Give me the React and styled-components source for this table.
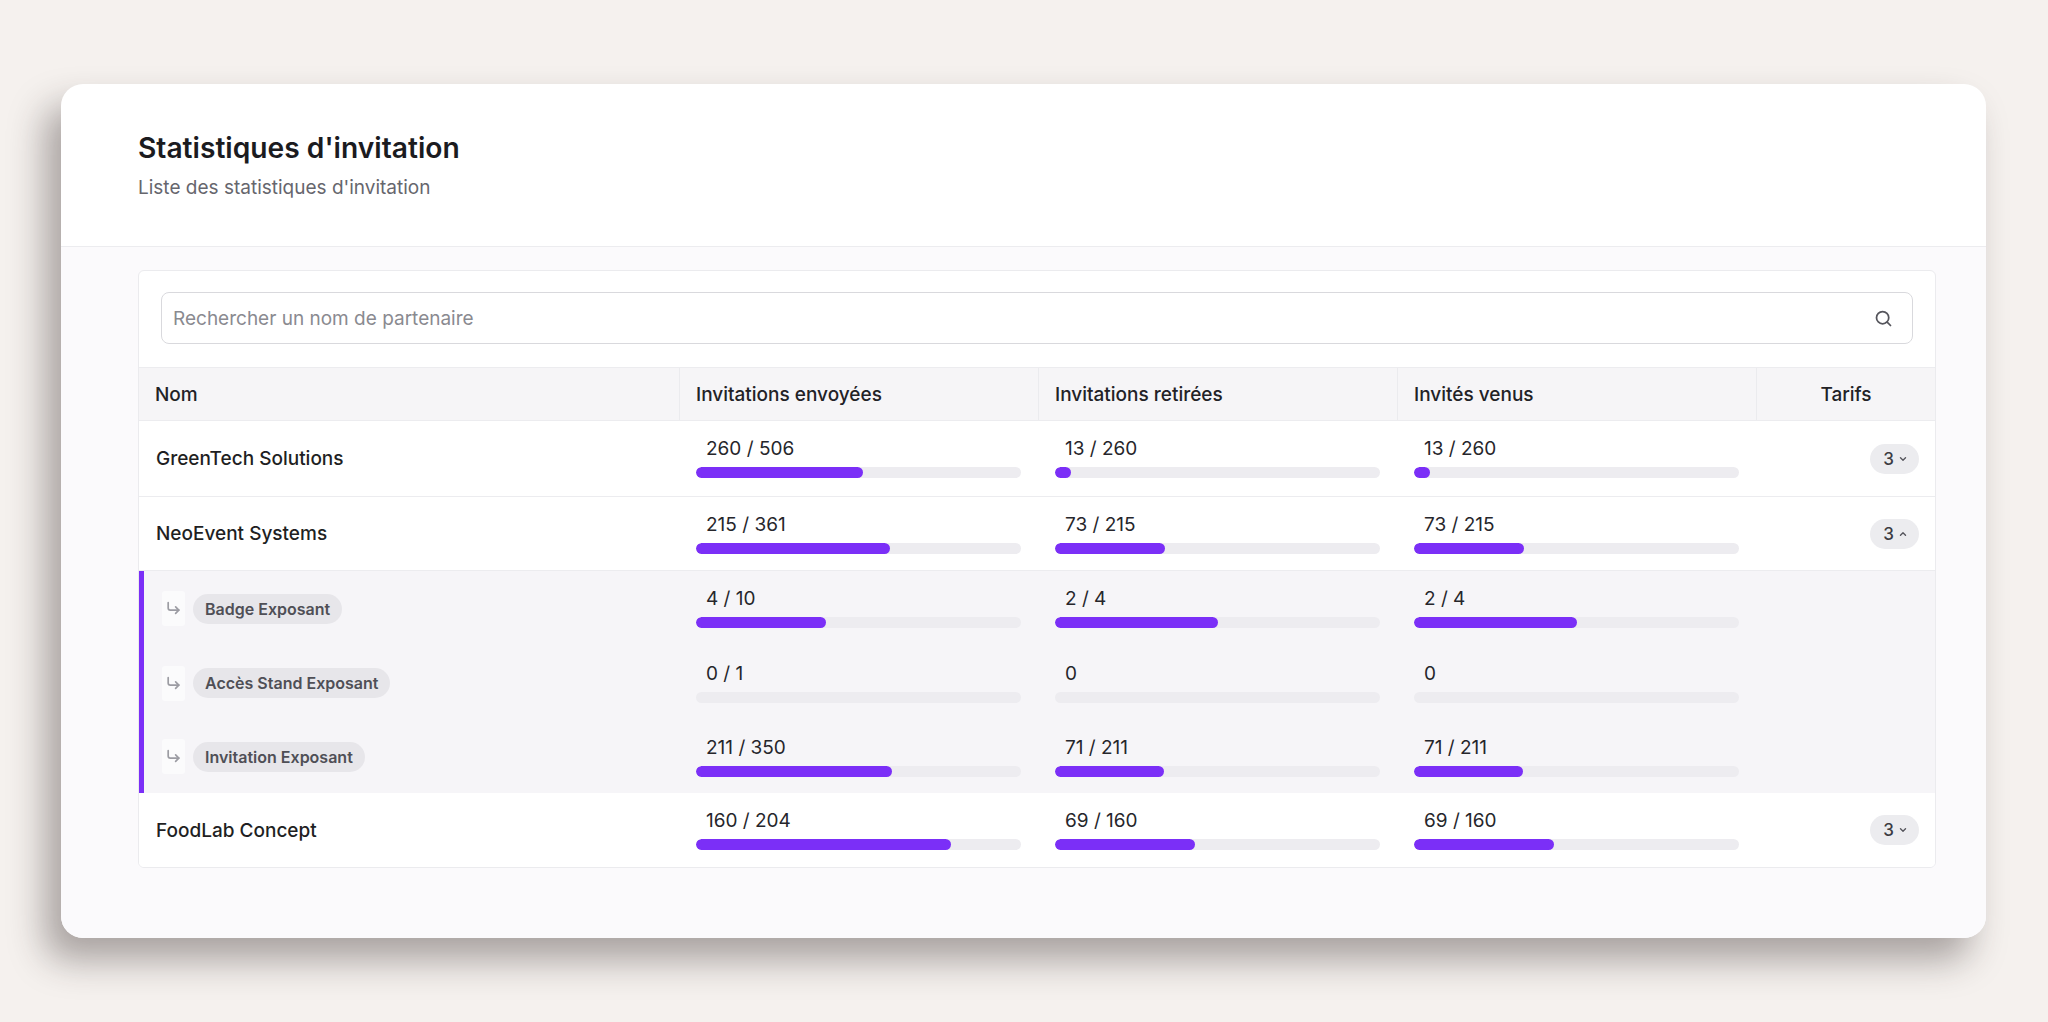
import React from 'react';
import styled, { createGlobalStyle } from 'styled-components';

const GlobalStyle = createGlobalStyle`
  html, body {
    margin: 0;
    padding: 0;
    background: #f5f1ee;
    font-family: Inter, "Noto Sans", sans-serif;
    color: #1f1f23;
  }
`;

const Page = styled.div`
  min-height: 1022px;
  padding: 84px 62px 0 61px;
  box-sizing: border-box;
`;

const Card = styled.div`
  background: #ffffff;
  border-radius: 22px;
  overflow: hidden;
  box-shadow: -16px 22px 36px rgba(45, 35, 35, 0.38);
`;

const Header = styled.div`
  padding: 46px 77px 45px;
  border-bottom: 1px solid #ececef;
`;

const Title = styled.h1`
  margin: 0;
  font-size: 28.2px;
  line-height: 36px;
  font-weight: 600;
  color: #1b1b1f;
`;

const Subtitle = styled.p`
  margin: 9px 0 0;
  font-size: 19px;
  line-height: 26px;
  color: #66666d;
`;

const Body = styled.div`
  background: #fbfafc;
  padding: 23px 50px 70px 77px;
`;

const Panel = styled.div`
  background: #ffffff;
  border: 1px solid #ebebee;
  border-radius: 6px;
  overflow: hidden;
`;

const SearchWrap = styled.div`
  padding: 21px 22px 23px;
`;

const SearchBox = styled.label`
  display: flex;
  align-items: center;
  height: 52px;
  box-sizing: border-box;
  border: 1.5px solid #d9d9dd;
  border-radius: 8px;
  padding: 0 18px 0 9px;
`;

const SearchInput = styled.input`
  flex: 1;
  border: 0;
  outline: none;
  background: transparent;
  font-family: inherit;
  font-size: 19px;
  color: #222;
  &::placeholder {
    color: #8a8a90;
  }
`;

const Grid = styled.div`
  display: grid;
  grid-template-columns: 540px 359px 359px 359px 1fr;
`;

const HeadRow = styled(Grid)`
  background: #f6f5f7;
  border-top: 1px solid #ececef;
  border-bottom: 1px solid #ececef;
  height: 52px;
`;

const HeadCell = styled.div`
  display: flex;
  align-items: center;
  justify-content: ${(p) => (p.$center ? 'center' : 'flex-start')};
  padding: 0 16px;
  font-size: 19px;
  font-weight: 500;
  color: #222226;
  border-left: ${(p) => (p.$first ? '0' : '1px solid #ebebee')};
`;

const Row = styled(Grid)`
  height: ${(p) => p.$h || 75}px;
  background: ${(p) => (p.$sub ? '#f6f5f8' : '#ffffff')};
  border-bottom: ${(p) => (p.$divider ? '1px solid #ececef' : '0')};
  box-shadow: ${(p) => (p.$sub ? 'inset 5px 0 0 #7b2ff7' : 'none')};
`;

const NameCell = styled.div`
  display: flex;
  align-items: center;
  padding: 0 17px;
  font-size: 19px;
  font-weight: 500;
  color: #1f1f23;
`;

const SubName = styled.div`
  display: flex;
  align-items: center;
  gap: 8px;
  padding: 0 23px;
`;

const ArrowBox = styled.span`
  display: flex;
  align-items: center;
  justify-content: center;
  width: 23px;
  height: 35px;
  background: #fbfbfc;
  border-radius: 3px;
  color: #9c9ca3;
`;

const Tag = styled.span`
  display: inline-flex;
  align-items: center;
  height: 30px;
  padding: 0 12px;
  border-radius: 15px;
  background: #e7e6ea;
  color: #4f4f56;
  font-size: 16px;
  font-weight: 600;
`;

const StatCell = styled.div`
  padding: 16px 17px 0;
`;

const StatValue = styled.div`
  font-size: 19px;
  line-height: 24px;
  color: #26262b;
  padding-left: 10px;
`;

const Track = styled.div`
  margin-top: 6px;
  height: 11px;
  border-radius: 6px;
  background: #edecf0;
  overflow: hidden;
`;

const Fill = styled.div`
  height: 100%;
  border-radius: 6px;
  background: #7b2ff7;
`;

const TarifCell = styled.div`
  display: flex;
  align-items: center;
  justify-content: flex-end;
  padding: 0 16px;
`;

const TarifPill = styled.button`
  display: inline-flex;
  align-items: center;
  gap: 5px;
  height: 30px;
  padding: 0 12px 0 13px;
  border: 0;
  border-radius: 15px;
  background: #ececef;
  font-family: inherit;
  font-size: 17px;
  font-weight: 500;
  color: #3b3b42;
`;

const SearchIcon = () => (
  <svg width="21" height="21" viewBox="0 0 24 24" fill="none" stroke="#55555c" strokeWidth="2" strokeLinecap="round">
    <circle cx="11" cy="11" r="7" />
    <path d="M16.5 16.5 20 20" />
  </svg>
);

const SubArrow = () => (
  <svg width="17" height="17" viewBox="0 0 16 16" fill="none" stroke="currentColor" strokeWidth="1.6" strokeLinecap="round" strokeLinejoin="round">
    <path d="M3 2.5v5a2 2 0 0 0 2 2h8" />
    <path d="M10 6.5l3 3-3 3" />
  </svg>
);

const Chevron = ({ up }) => (
  <svg width="8" height="8" viewBox="0 0 8 8" fill="none" stroke="#55555c" strokeWidth="1.4" strokeLinecap="round" strokeLinejoin="round">
    <path d={up ? 'M1.5 5.2 4 2.8l2.5 2.4' : 'M1.5 2.8 4 5.2l2.5-2.4'} />
  </svg>
);

const Stat = ({ value, total }) => {
  const pct = total ? (value / total) * 100 : 0;
  return (
    <StatCell>
      <StatValue>{total ? `${value} / ${total}` : value}</StatValue>
      <Track>
        <Fill style={{ width: `${pct}%` }} />
      </Track>
    </StatCell>
  );
};

const partners = [
  {
    name: 'GreenTech Solutions',
    sent: [260, 506],
    taken: [13, 260],
    came: [13, 260],
    tarifs: 3,
    h: 75,
  },
  {
    name: 'NeoEvent Systems',
    sent: [215, 361],
    taken: [73, 215],
    came: [73, 215],
    tarifs: 3,
    h: 73,
    open: true,
    children: [
      { name: 'Badge Exposant', sent: [4, 10], taken: [2, 4], came: [2, 4], h: 75 },
      { name: 'Accès Stand Exposant', sent: [0, 1], taken: [0, 0], came: [0, 0], h: 74 },
      { name: 'Invitation Exposant', sent: [211, 350], taken: [71, 211], came: [71, 211], h: 73 },
    ],
  },
  {
    name: 'FoodLab Concept',
    sent: [160, 204],
    taken: [69, 160],
    came: [69, 160],
    tarifs: 3,
    h: 74,
  },
];

const App = () => {
  return (
    <Page>
      <GlobalStyle />
      <Card>
        <Header>
          <Title>Statistiques d'invitation</Title>
          <Subtitle>Liste des statistiques d'invitation</Subtitle>
        </Header>
        <Body>
          <Panel>
            <SearchWrap>
              <SearchBox>
                <SearchInput placeholder="Rechercher un nom de partenaire" />
                <SearchIcon />
              </SearchBox>
            </SearchWrap>
            <HeadRow>
              <HeadCell $first>Nom</HeadCell>
              <HeadCell>Invitations envoyées</HeadCell>
              <HeadCell>Invitations retirées</HeadCell>
              <HeadCell>Invités venus</HeadCell>
              <HeadCell $center>Tarifs</HeadCell>
            </HeadRow>
            {partners.map((p, i) => (
              <React.Fragment key={p.name}>
                <Row $h={p.h} $divider={i < partners.length - 1}>
                  <NameCell>{p.name}</NameCell>
                  <Stat value={p.sent[0]} total={p.sent[1]} />
                  <Stat value={p.taken[0]} total={p.taken[1]} />
                  <Stat value={p.came[0]} total={p.came[1]} />
                  <TarifCell>
                    <TarifPill>
                      {p.tarifs}
                      <Chevron up={p.open} />
                    </TarifPill>
                  </TarifCell>
                </Row>
                {p.open &&
                  p.children.map((c) => (
                    <Row key={c.name} $sub $h={c.h}>
                      <SubName>
                        <ArrowBox>
                          <SubArrow />
                        </ArrowBox>
                        <Tag>{c.name}</Tag>
                      </SubName>
                      <Stat value={c.sent[0]} total={c.sent[1]} />
                      <Stat value={c.taken[0]} total={c.taken[1]} />
                      <Stat value={c.came[0]} total={c.came[1]} />
                      <div />
                    </Row>
                  ))}
              </React.Fragment>
            ))}
          </Panel>
        </Body>
      </Card>
    </Page>
  );
};

export default App;
